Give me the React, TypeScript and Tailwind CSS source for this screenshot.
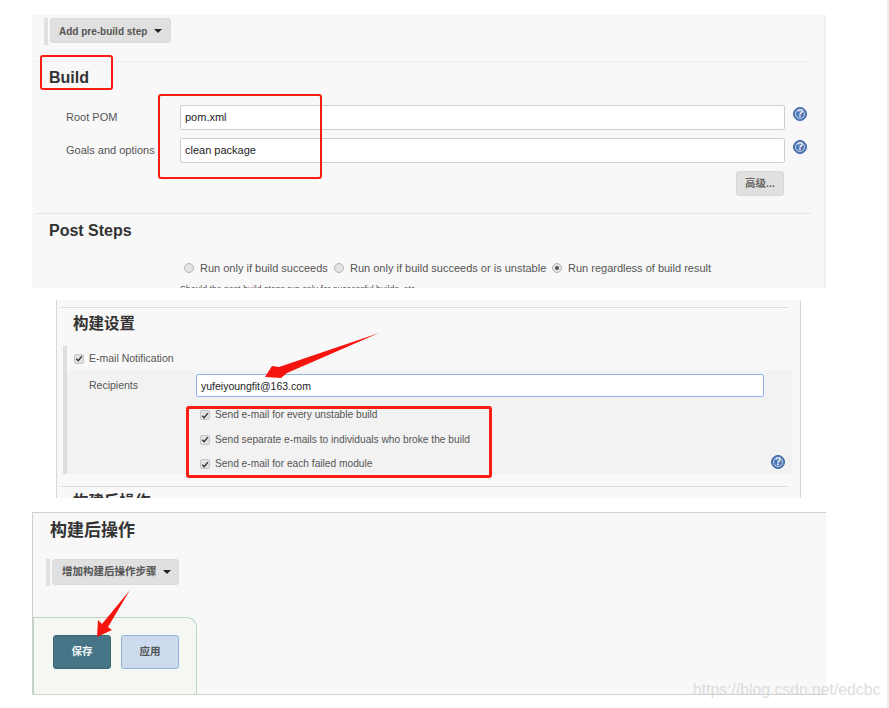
const sans = 'font-["Liberation_Sans","Noto_Sans_CJK_SC",sans-serif]';

function Help() {
  return (
    <span className="flex h-[14px] w-[14px] items-center justify-center rounded-full border border-[#3d68a6] bg-[#5079b5] text-[10px] leading-none font-bold text-white outline outline-1 -outline-offset-[3px] outline-[#c4d4ea]">
      ?
    </span>
  );
}

function Caret() {
  return <span className="h-0 w-0 border-x-[4px] border-t-[4px] border-x-transparent border-t-[#222]" />;
}

function Radio({ on }: { on?: boolean }) {
  return (
    <span className="flex h-[10px] w-[10px] items-center justify-center rounded-full border border-[#b5b5b5] bg-[#e4e4e4]">
      {on && <span className="h-[4px] w-[4px] rounded-full bg-[#555]" />}
    </span>
  );
}

function Check() {
  return (
    <span className="flex h-[10px] w-[10px] items-center justify-center rounded-[2px] border border-[#c4c4c4] bg-[#e2e2e2]">
      <svg viewBox="0 0 10 10" className="h-[9px] w-[9px]">
        <path d="M1.5 5.2 L4 7.8 L8.6 2" fill="none" stroke="#333" strokeWidth="1.7" />
      </svg>
    </span>
  );
}

function RedBox({ className }: { className: string }) {
  return <div className={`absolute rounded-[3px] border-[#fb1c14] ${className}`} />;
}

function BuildPanel() {
  return (
    <section className="relative ml-[32px] h-[273px] w-[794px] overflow-hidden border-r-2 border-[#f0f0f0] bg-[#f8f8f8]">
      <div className="flex h-[26px] items-stretch pt-[3px] pl-[12px]">
        <span className="h-[27px] w-[4px] bg-[#e0e0e0]" />
        <button className="ml-[2px] flex h-[25px] w-[121px] items-center gap-[7px] rounded-[3px] border border-[#dadada] bg-[#e0e0e0] pt-px pl-[8px] text-[10px] font-bold text-[#555]">
          Add pre-build step
          <Caret />
        </button>
      </div>
      <div className="mt-[20px] ml-[3px] h-px w-[776px] bg-[#eeeeee]" />
      <h2 className="mt-[7px] ml-[17px] text-[16px] leading-[18px] font-bold text-[#333]">Build</h2>
      <div className="mt-[18px] flex items-center pl-[34px]">
        <label className="w-[114px] text-[11px] text-[#555]">Root POM</label>
        <input readOnly value="pom.xml" className="h-[25px] w-[605px] rounded-[2px] border border-[#cfcfcf] bg-white pb-px pl-[4px] text-[11px] text-[#222]" />
        <span className="mb-[7px] ml-[8px]"><Help /></span>
      </div>
      <div className="mt-[8px] flex items-center pl-[34px]">
        <label className="w-[114px] text-[11px] text-[#555]">Goals and options</label>
        <input readOnly value="clean package" className="h-[25px] w-[605px] rounded-[2px] border border-[#cfcfcf] bg-white pb-px pl-[4px] text-[11px] text-[#222]" />
        <span className="mb-[7px] ml-[8px]"><Help /></span>
      </div>
      <div className="mt-[8px] flex justify-end pr-[40px]">
        <button className="h-[25px] w-[48px] rounded-[3px] border border-[#d8d8d8] bg-[#e0e0e0] text-[10.5px] font-bold text-[#666]">高级...</button>
      </div>
      <div className="mt-[17px] ml-[3px] h-px w-[776px] bg-[#e6e6e6]" />
      <h2 className="mt-[8px] ml-[17px] text-[16px] leading-[18px] font-bold text-[#333]">Post Steps</h2>
      <div className="mt-[20px] flex h-[16px] items-center pl-[152px] text-[11px] text-[#555]">
        <Radio />
        <span className="ml-[6px] w-[134px]">Run only if build succeeds</span>
        <Radio />
        <span className="ml-[6px] w-[202px]">Run only if build succeeds or is unstable</span>
        <Radio on />
        <span className="ml-[6px]">Run regardless of build result</span>
      </div>
      <p className="mt-[8px] ml-[148px] text-[8.7px] leading-[10px] text-[#555]">
        Should the post-build steps run only for successful builds, etc.
      </p>
      <RedBox className="top-[40px] left-[8px] h-[35px] w-[73px] border-2" />
      <RedBox className="top-[79px] left-[126px] h-[85px] w-[164px] border-2" />
    </section>
  );
}

function EmailPanel() {
  const options = [
    'Send e-mail for every unstable build',
    'Send separate e-mails to individuals who broke the build',
    'Send e-mail for each failed module',
  ];
  return (
    <section className="relative mt-[12px] ml-[56px] h-[198px] w-[745px] overflow-hidden border-x border-[#d8d8d8] bg-[#f8f8f8]">
      <div className="mt-[7px] ml-[4px] h-px w-[727px] bg-[#dcdcdc]" />
      <h2 className="mt-[6px] ml-[16px] text-[15.5px] leading-[20px] font-bold text-[#333]">构建设置</h2>
      <div className="mt-[12px] ml-[6px] h-[128px] w-[729px] border-l-[4px] border-[#dedede]">
        <div className="flex h-[24px] items-center pt-px pl-[7px] text-[10.5px] text-[#555]">
          <Check />
          <span className="ml-[5px]">E-mail Notification</span>
        </div>
        <div className="relative h-[104px] bg-[#f2f2f2] pt-[4px]">
          <div className="flex items-center pl-[22px]">
            <label className="w-[107px] text-[10.5px] text-[#555]">Recipients</label>
            <input readOnly value="yufeiyoungfit@163.com" className="h-[23px] w-[568px] rounded-[2px] border border-[#8fb4ea] bg-white pl-[4px] text-[10.5px] text-[#222]" />
          </div>
          <ul className="mt-[11px] flex flex-col gap-[10.5px] pl-[133px]">
            {options.map((text) => (
              <li key={text} className="flex h-[14px] items-center text-[10.2px] text-[#555]">
                <Check />
                <span className="ml-[5px]">{text}</span>
              </li>
            ))}
          </ul>
          <span className="absolute right-[7px] bottom-[5px]"><Help /></span>
        </div>
      </div>
      <div className="mt-[12px] ml-[4px] h-px w-[727px] bg-[#dcdcdc]" />
      <h2 className="mt-[5px] ml-[16px] text-[15.5px] leading-[20px] font-bold text-[#333]">构建后操作</h2>
      <RedBox className="top-[106px] left-[129px] h-[72px] w-[306px] border-[3px]" />
    </section>
  );
}

function ActionsPanel() {
  return (
    <section className="mt-[14px] ml-[32px] h-[183px] w-[794px] overflow-hidden border-t border-b border-l border-[#d0d0d0] bg-[#f8f8f8]">
      <h2 className="mt-[8px] ml-[17px] text-[17px] leading-[20px] font-bold text-[#333]">构建后操作</h2>
      <div className="mt-[18px] ml-[13px] flex items-start">
        <span className="h-[27px] w-[4px] bg-[#e0e0e0]" />
        <button className="ml-[2px] flex h-[26px] w-[127px] items-center gap-[6px] rounded-[3px] border border-[#dadada] bg-[#e0e0e0] pl-[9px] text-[10.5px] font-bold text-[#555]">
          增加构建后操作步骤
          <Caret />
        </button>
      </div>
      <div className="mt-[31px] flex h-[77px] w-[164px] gap-[10px] rounded-tr-[10px] border-t border-r border-l border-[#b9d6c1] bg-[#f5f8f2] pt-[17px] pl-[19px]">
        <button className="h-[34px] w-[58px] rounded-[3px] border border-[#3a6575] bg-[#457586] text-[10.5px] font-bold text-[#eef4f5]">保存</button>
        <button className="h-[34px] w-[58px] rounded-[3px] border border-[#8fb2dc] bg-[#ccdcee] text-[10.5px] font-bold text-[#555]">应用</button>
      </div>
    </section>
  );
}

export default function App() {
  return (
    <div className={`relative h-[708px] w-[889px] overflow-hidden border-r-2 border-[#eeeeee] bg-white pt-[15px] ${sans}`}>
      <BuildPanel />
      <EmailPanel />
      <ActionsPanel />
      {/* red arrows drawn over the screenshots */}
      <svg className="pointer-events-none absolute top-0 left-0" width="889" height="708">
        <polygon points="379,333 287,373 281,378 265,377 272,366 279,367" fill="#f5140e" />
        <polygon points="130,590 108,627 112,630 97,637 98,620 102,624" fill="#f5140e" />
      </svg>
      <span className="absolute top-[680px] left-[693px] text-[15.75px] leading-[20px] text-[#d4d4d4]/80">
        https://blog.csdn.net/edcbc
      </span>
    </div>
  );
}
